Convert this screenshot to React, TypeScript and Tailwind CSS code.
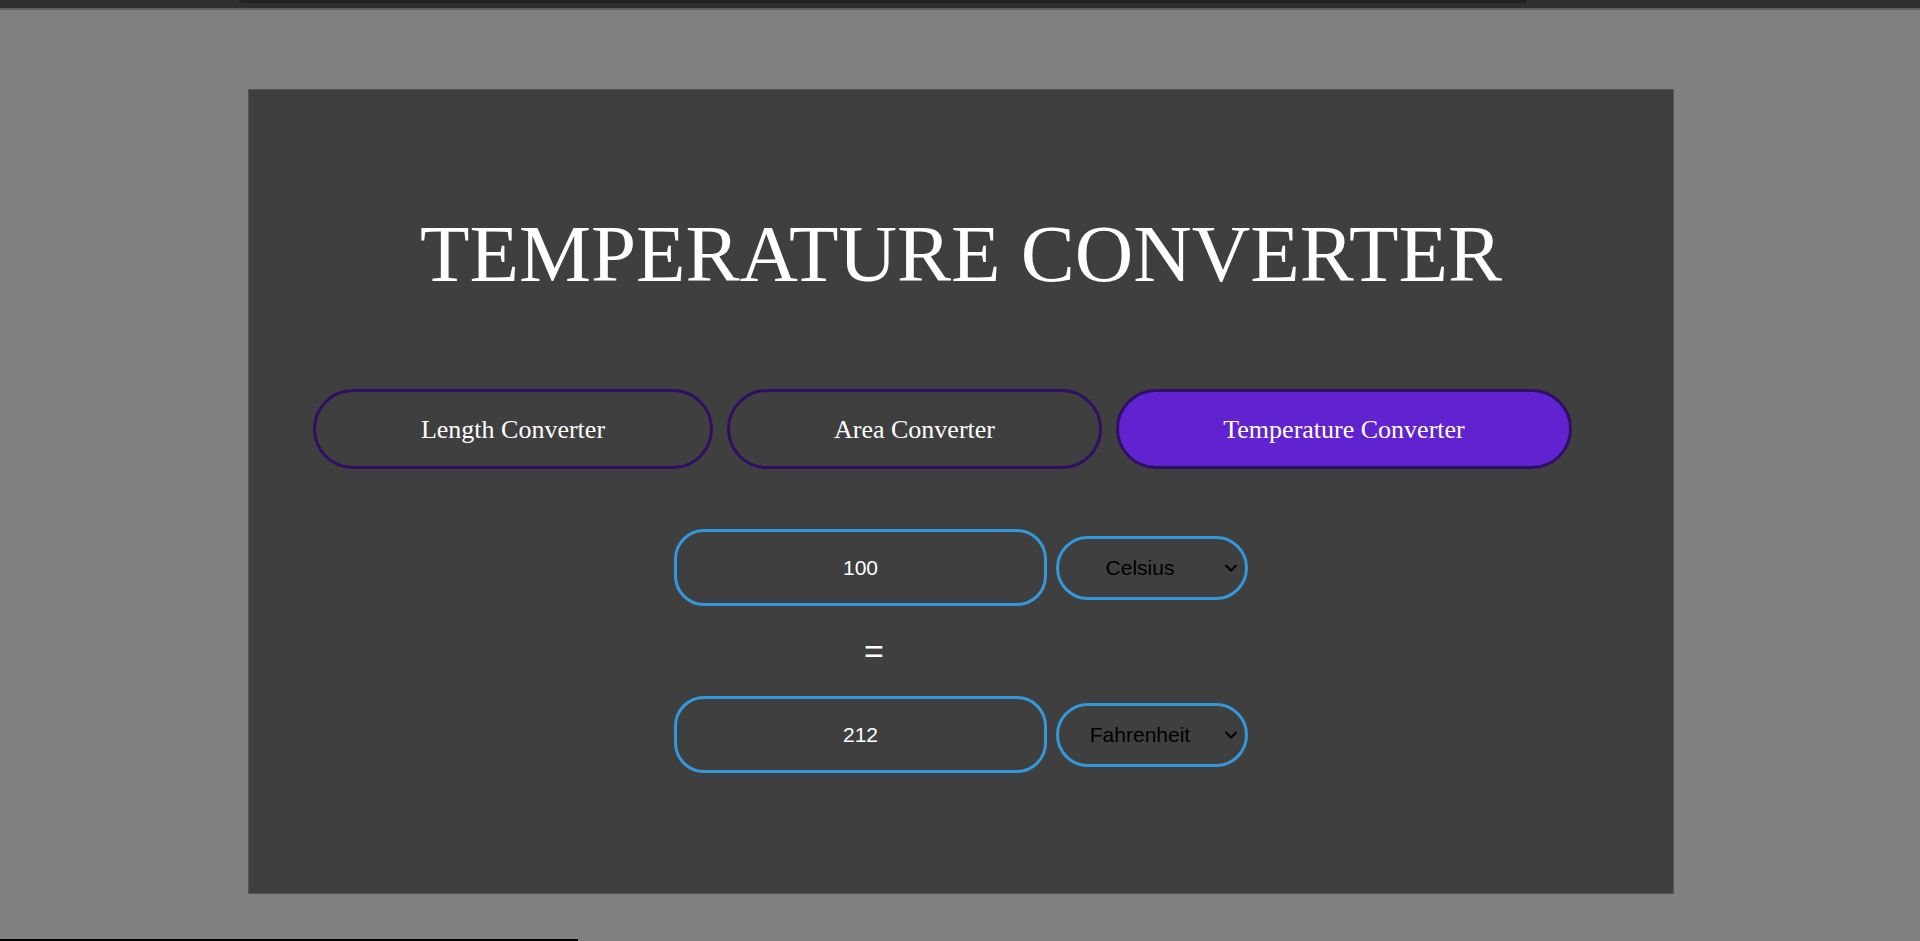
import { useState } from "react";

type Tab = "length" | "area" | "temperature";

const tabs: { id: Tab; label: string; width: string }[] = [
  { id: "length", label: "Length Converter", width: "w-[400px]" },
  { id: "area", label: "Area Converter", width: "w-[375px]" },
  { id: "temperature", label: "Temperature Converter", width: "w-[456px]" },
];

function toFahrenheit(c: number) {
  return c * 1.8 + 32;
}

function UnitSelect({ value, options }: { value: string; options: string[] }) {
  return (
    <div className="relative">
      <select
        defaultValue={value}
        className="h-[64px] w-[192px] appearance-none rounded-full border-[3px] border-[#3498db] bg-transparent pr-[24px] text-center font-['Liberation_Sans',Arial,sans-serif] text-[21px] text-black outline-none"
      >
        {options.map((o) => (
          <option key={o}>{o}</option>
        ))}
      </select>
      <svg
        className="pointer-events-none absolute right-[10px] top-1/2 h-[9px] w-[14px] -translate-y-1/2"
        viewBox="0 0 14 9"
        fill="none"
        stroke="#000"
        strokeWidth="2"
      >
        <path d="M1.5 1.5l5.5 5.5 5.5-5.5" />
      </svg>
    </div>
  );
}

export default function App() {
  const [active, setActive] = useState<Tab>("temperature");
  const [celsius, setCelsius] = useState("100");
  const result = Number.isNaN(parseFloat(celsius)) ? "" : String(toFahrenheit(parseFloat(celsius)));

  return (
    <div className="flex h-[941px] flex-col overflow-hidden bg-[#808080]">
      <div className="h-[8px] bg-[#2f2f2f]">
        <div className="ml-[239px] h-[3px] w-[1288px] rounded-b-[4px] bg-[#202124]" />
      </div>
      <div className="h-[2px] bg-[#5e5e5e]" />

      <main className="ml-[248px] mt-[79px] h-[805px] w-[1426px] border border-[#555] bg-[#3f3f3f]">
        <h1 className="mt-[124px] text-center font-['Liberation_Serif','Times_New_Roman',serif] text-[81px] leading-[80px] text-white">
          TEMPERATURE CONVERTER
        </h1>

        <nav className="mt-[95px] flex gap-[14px] pl-[64px]">
          {tabs.map((t) => (
            <button
              key={t.id}
              type="button"
              onClick={() => setActive(t.id)}
              className={`h-[80px] ${t.width} rounded-full border-[3px] border-[#2e0f63] font-['Liberation_Serif','Times_New_Roman',serif] text-[26px] text-white ${
                active === t.id ? "bg-[#6023cf]" : "bg-transparent"
              }`}
            >
              {t.label}
            </button>
          ))}
        </nav>

        <section className="mt-[60px] flex flex-col items-center">
          <div className="flex items-center gap-[9px]">
            <input
              value={celsius}
              onChange={(e) => setCelsius(e.target.value)}
              className="h-[77px] w-[373px] rounded-[30px] border-[3px] border-[#3498db] bg-transparent text-center font-['Liberation_Sans',Arial,sans-serif] text-[21px] text-white outline-none"
            />
            <UnitSelect value="Celsius" options={["Celsius", "Fahrenheit", "Kelvin"]} />
          </div>

          <div className="w-[574px] py-[28px] pl-[190px] font-['Liberation_Sans',Arial,sans-serif] text-[34px] leading-[34px] text-white">
            =
          </div>

          <div className="flex items-center gap-[9px]">
            <input
              value={result}
              readOnly
              className="h-[77px] w-[373px] rounded-[30px] border-[3px] border-[#3498db] bg-transparent text-center font-['Liberation_Sans',Arial,sans-serif] text-[21px] text-white outline-none"
            />
            <UnitSelect value="Fahrenheit" options={["Celsius", "Fahrenheit", "Kelvin"]} />
          </div>
        </section>
      </main>

      <div className="flex-1" />
      <div className="h-[2px]">
        <div className="h-full w-[578px] bg-black" />
      </div>
    </div>
  );
}
